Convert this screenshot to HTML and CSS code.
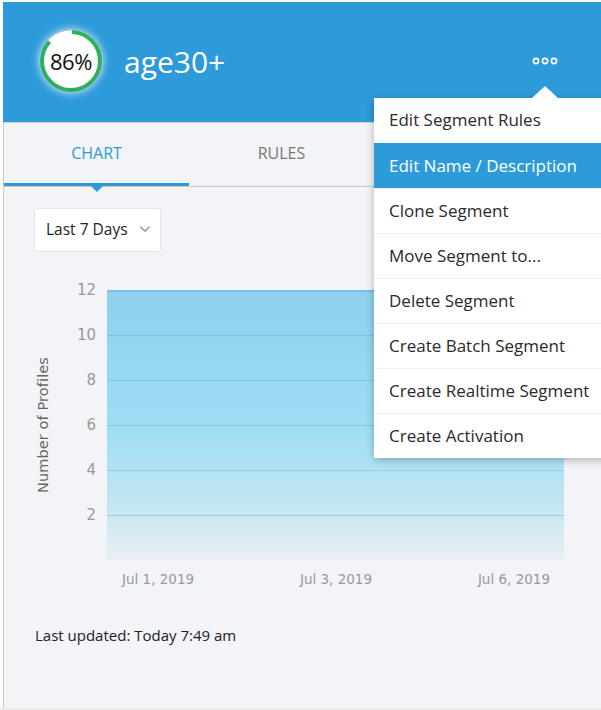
FILE: index.html
```html
<!DOCTYPE html>
<html>
<head>
<meta charset="utf-8">
<link rel="stylesheet" href="styles.css">
</head>
<body>
<div class="panel">
  <header class="header">
    <div class="score">
      <svg class="ring" width="66" height="66" viewBox="0 0 66 66">
        <circle cx="33" cy="33" r="31" fill="#fff" stroke="#b9c2c9" stroke-width="1"/>
        <circle cx="33" cy="33" r="29" fill="#fff" stroke="#2bb160" stroke-width="4"
          stroke-dasharray="156.7 25.5" transform="rotate(-88 33 33)"/>
      </svg>
      <span class="score-text">86%</span>
    </div>
    <h1 class="title">age30+</h1>
    <button class="more" aria-label="More">
      <svg width="26" height="8" viewBox="0 0 26 8">
        <circle cx="4" cy="4" r="2.6" fill="none" stroke="#fff" stroke-width="1.6"/>
        <circle cx="13" cy="4" r="2.6" fill="none" stroke="#fff" stroke-width="1.6"/>
        <circle cx="22" cy="4" r="2.6" fill="none" stroke="#fff" stroke-width="1.6"/>
      </svg>
    </button>
  </header>

  <div class="content">
    <nav class="tabs">
      <div class="tab active">CHART</div>
      <div class="tab">RULES</div>
      <div class="tab"></div>
    </nav>

    <div class="body">
      <div class="select">
        <span>Last 7 Days</span>
        <svg width="12" height="8" viewBox="0 0 12 8"><path d="M1.5 1.8 L6 6.2 L10.5 1.8" fill="none" stroke="#888" stroke-width="1.3"/></svg>
      </div>

      <div class="chart">
        <div class="ytitle"><span>Number of Profiles</span></div>
        <div class="ylabels">
          <div>12</div><div>10</div><div>8</div><div>6</div><div>4</div><div>2</div>
        </div>
        <div class="plot"></div>
        <div class="xlabels">
          <span>Jul 1, 2019</span><span>Jul 3, 2019</span><span>Jul 6, 2019</span>
        </div>
      </div>

      <p class="updated">Last updated: Today 7:49 am</p>
    </div>
  </div>

  <ul class="menu">
    <li>Edit Segment Rules</li>
    <li class="hl">Edit Name / Description</li>
    <li>Clone Segment</li>
    <li>Move Segment to...</li>
    <li>Delete Segment</li>
    <li>Create Batch Segment</li>
    <li>Create Realtime Segment</li>
    <li>Create Activation</li>
  </ul>
</div>
</body>
</html>
```

FILE: styles.css
```css
* { box-sizing: border-box; }
html, body { margin: 0; padding: 0; }
body {
  background: #ececec;
  width: 601px;
  height: 710px;
  overflow: hidden;
  font-family: "Open Sans", Lato, sans-serif;
  color: #333;
}
.panel {
  position: relative;
  margin-left: 3px;
  border-top: 2px solid #fff;
  height: 708px;
  background: #f3f4f8;
  display: flex;
  flex-direction: column;
}
body::before {
  content: "";
  position: absolute;
  left: 0; top: 0;
  width: 3px; height: 708px;
  background: #fff;
}
.header {
  height: 120px;
  flex: none;
  background: #2d9bda;
  display: flex;
  align-items: center;
  padding-left: 35px;
  padding-right: 40px;
}
.score {
  position: relative;
  width: 66px;
  height: 66px;
  flex: none;
  margin-top: -2px;
}
.ring {
  display: block;
  filter: drop-shadow(0 0 4px rgba(255,255,255,0.85));
}
.score-text {
  position: absolute;
  inset: 0;
  display: flex;
  align-items: center;
  justify-content: center;
  font-size: 22px;
  font-weight: 500;
  color: #111;
  letter-spacing: -0.4px;
}
.title {
  margin: 0 0 0 20px;
  font-weight: 400;
  font-size: 30px;
  color: #fff;
  flex: 1;
  margin-top: -2px;
}
.more {
  background: none;
  border: 0;
  padding: 0;
  display: flex;
  margin-top: -3px;
  margin-right: 3px;
}
.content {
  flex: 1;
  border-left: 1px solid #c9c9c9;
  display: flex;
  flex-direction: column;
}
.tabs {
  display: flex;
  height: 65px;
  border-top: 1px solid #d4d4d4;
  border-bottom: 1px solid #c9c9c9;
  flex: none;
}
.tab {
  width: 185px;
  display: flex;
  align-items: center;
  justify-content: center;
  font-size: 16px;
  color: #777;
  padding-bottom: 4px;
  position: relative;
}
.tab.active {
  color: #2d9bda;
  border-bottom: 3px solid #2d9bda;
  padding-bottom: 1px;
}
.tab.active::after {
  content: "";
  position: absolute;
  left: 50%;
  bottom: -9px;
  margin-left: -6px;
  border-left: 6px solid transparent;
  border-right: 6px solid transparent;
  border-top: 6px solid #2d9bda;
}
.body {
  padding: 21px 0 0 30px;
}
.select {
  width: 127px;
  height: 44px;
  background: #fff;
  border: 1px solid #e3e5ea;
  border-radius: 3px;
  display: flex;
  align-items: center;
  justify-content: space-between;
  padding: 0 9px 2px 11px;
  font-size: 15.5px;
  color: #222;
}
.chart {
  margin-top: 28px;
  display: grid;
  grid-template-columns: 18px 55px 457px;
  grid-template-rows: 280px auto;
}
.ytitle {
  grid-row: 1;
  grid-column: 1;
  display: flex;
  align-items: center;
  justify-content: center;
  padding-top: 10px;
}
.ytitle span {
  display: block;
  transform: rotate(-90deg);
  white-space: nowrap;
  color: #666;
  font-family: "DejaVu Sans", sans-serif;
  font-size: 14.5px;
  letter-spacing: 0.1px;
}
.ylabels {
  grid-row: 1;
  grid-column: 2;
  display: flex;
  flex-direction: column;
  padding-right: 11px;
}
.ylabels div {
  height: 45px;
  line-height: 20px;
  text-align: right;
  font-family: "DejaVu Sans", sans-serif;
  font-size: 15px;
  color: #999;
}
.plot {
  grid-row: 1;
  grid-column: 3;
  margin-top: 10px;
  height: 270px;
  border-top: 2px solid #75c2e7;
  background:
    repeating-linear-gradient(to bottom, transparent 0, transparent 43px, rgba(110,170,200,0.45) 43px, rgba(110,170,200,0.45) 44px, transparent 44px, transparent 45px),
    linear-gradient(to bottom, #8ed0ed 0%, #9ddef4 50%, #c4e6f2 80%, #e9eff5 100%);
  background-position: 0 0, 0 0;
}
.xlabels {
  grid-row: 2;
  grid-column: 3;
  display: flex;
  justify-content: space-between;
  padding: 11px 14px 0 15px;
  font-family: "DejaVu Sans", sans-serif;
  font-size: 13.5px;
  color: #999;
}
.updated {
  margin: 38px 0 0 1px;
  font-size: 15px;
  color: #222;
}
.menu {
  position: absolute;
  left: 371px;
  top: 96px;
  width: 240px;
  margin: 0;
  padding: 0;
  list-style: none;
  background: #fff;
  box-shadow: 0 2px 8px rgba(0,0,0,0.28);
}
.menu::before {
  content: "";
  position: absolute;
  left: 158px;
  top: -12px;
  border-left: 13px solid transparent;
  border-right: 13px solid transparent;
  border-bottom: 12px solid #fff;
}
.menu li {
  height: 45px;
  display: flex;
  align-items: center;
  padding-left: 15px;
  padding-bottom: 2px;
  font-size: 17px;
  color: #2a2a2a;
  border-top: 1px solid #f0f0f0;
}
.menu li:first-child { border-top: 0; }
.menu li.hl {
  background: #2d9bda;
  color: #fff;
  border-top-color: #2d9bda;
}
```
